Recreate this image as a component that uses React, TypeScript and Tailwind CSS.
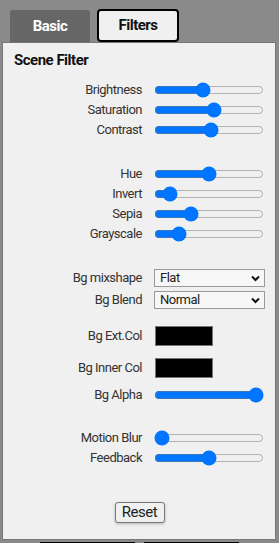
import * as React from 'react';

const font = "font-['Roboto','Liberation_Sans',sans-serif] tracking-[-0.5px]";

function SliderRow({ label, value, className = 'h-[20px]' }: { label: string; value: number; className?: string }) {
  return (
    <div className={`flex items-center ${className}`}>
      <span className="w-[139px] text-right text-[13px] text-[#333]">{label}</span>
      <input
        type="range"
        min={0}
        max={100}
        defaultValue={value}
        className="ml-[12px] w-[110px] h-[16px]"
      />
    </div>
  );
}

function SelectRow({ label, value, options }: { label: string; value: string; options: string[] }) {
  return (
    <div className="flex items-center h-[22px]">
      <span className="w-[139px] text-right text-[13px] text-[#333]">{label}</span>
      <div className="relative ml-[12px] w-[111px] h-[18px]">
        <select
          defaultValue={value}
          className="block w-full h-full appearance-none rounded-none border border-[#9a9a9a] bg-[#f7f7f7] pl-[5px] text-[13px] leading-[16px] text-[#222] outline-none"
        >
          {options.map((o) => (
            <option key={o}>{o}</option>
          ))}
        </select>
        <svg className="pointer-events-none absolute right-[5px] top-[6px] w-[9px] h-[7px]" viewBox="0 0 9 7">
          <path d="M1 1.5 L4.5 5 L8 1.5" fill="none" stroke="#111" strokeWidth="2" />
        </svg>
      </div>
    </div>
  );
}

function ColorRow({ label }: { label: string }) {
  return (
    <div className="flex items-center h-[32px]">
      <span className="w-[139px] text-right text-[13px] text-[#333]">{label}</span>
      <div className="ml-[13px] w-[58px] h-[20px] bg-black border border-[#777]" />
    </div>
  );
}

export default function App() {
  return (
    <div className={`h-[543px] w-[279px] overflow-hidden bg-[#8a8a8a] ${font}`}>
      <div className="flex items-end pt-[9px] h-[42px]">
        <button className="ml-[10px] w-[80px] h-[32px] bg-[#666] rounded-t-[3px] text-white font-bold text-[15px]">
          Basic
        </button>
        <button className="ml-[7px] w-[82px] h-[33px] bg-[#f0f0f0] border-2 border-black rounded-[4px] text-[#111] font-bold text-[15px]">
          Filters
        </button>
      </div>

      <div className="ml-[2px] w-[274px] bg-[#f0f0f0] border border-[#777] flex flex-col">
        <h2 className="pl-[11px] pt-[7px] h-[27px] text-[15px] font-bold text-[#111] leading-[20px]">Scene Filter</h2>

        <div className="mt-[10px]">
          <SliderRow label="Brightness" value={44} />
          <SliderRow label="Saturation" value={55} />
          <SliderRow label="Contrast" value={52} />
        </div>

        <div className="mt-[24px]">
          <SliderRow label="Hue" value={50} />
          <SliderRow label="Invert" value={9} />
          <SliderRow label="Sepia" value={31} />
          <SliderRow label="Grayscale" value={18} />
        </div>

        <div className="mt-[23px]">
          <SelectRow label="Bg mixshape" value="Flat" options={['Flat', 'Sphere', 'Tunnel']} />
          <SelectRow label="Bg Blend" value="Normal" options={['Normal', 'Add', 'Multiply', 'Screen']} />
        </div>

        <div className="mt-[9px]">
          <ColorRow label="Bg Ext.Col" />
          <ColorRow label="Bg Inner Col" />
          <SliderRow label="Bg Alpha" value={100} className="h-[22px]" />
        </div>

        <div className="mt-[22px]">
          <SliderRow label="Motion Blur" value={0} />
          <SliderRow label="Feedback" value={50} />
        </div>

        <div className="flex justify-center mt-[34px] pb-[16px]">
          <button className="ml-[1px] w-[50px] h-[21px] bg-[#f0f0f0] border border-[#777] rounded-[3px] shadow-[0_1px_3px_rgba(0,0,0,0.25)] text-[15px] text-[#222] leading-none">
            Reset
          </button>
        </div>
      </div>

      <div className="flex mt-[2px]">
        <div className="ml-[40px] w-[95px] h-[10px] bg-black" />
        <div className="ml-[9px] w-[95px] h-[10px] bg-black" />
      </div>
    </div>
  );
}
